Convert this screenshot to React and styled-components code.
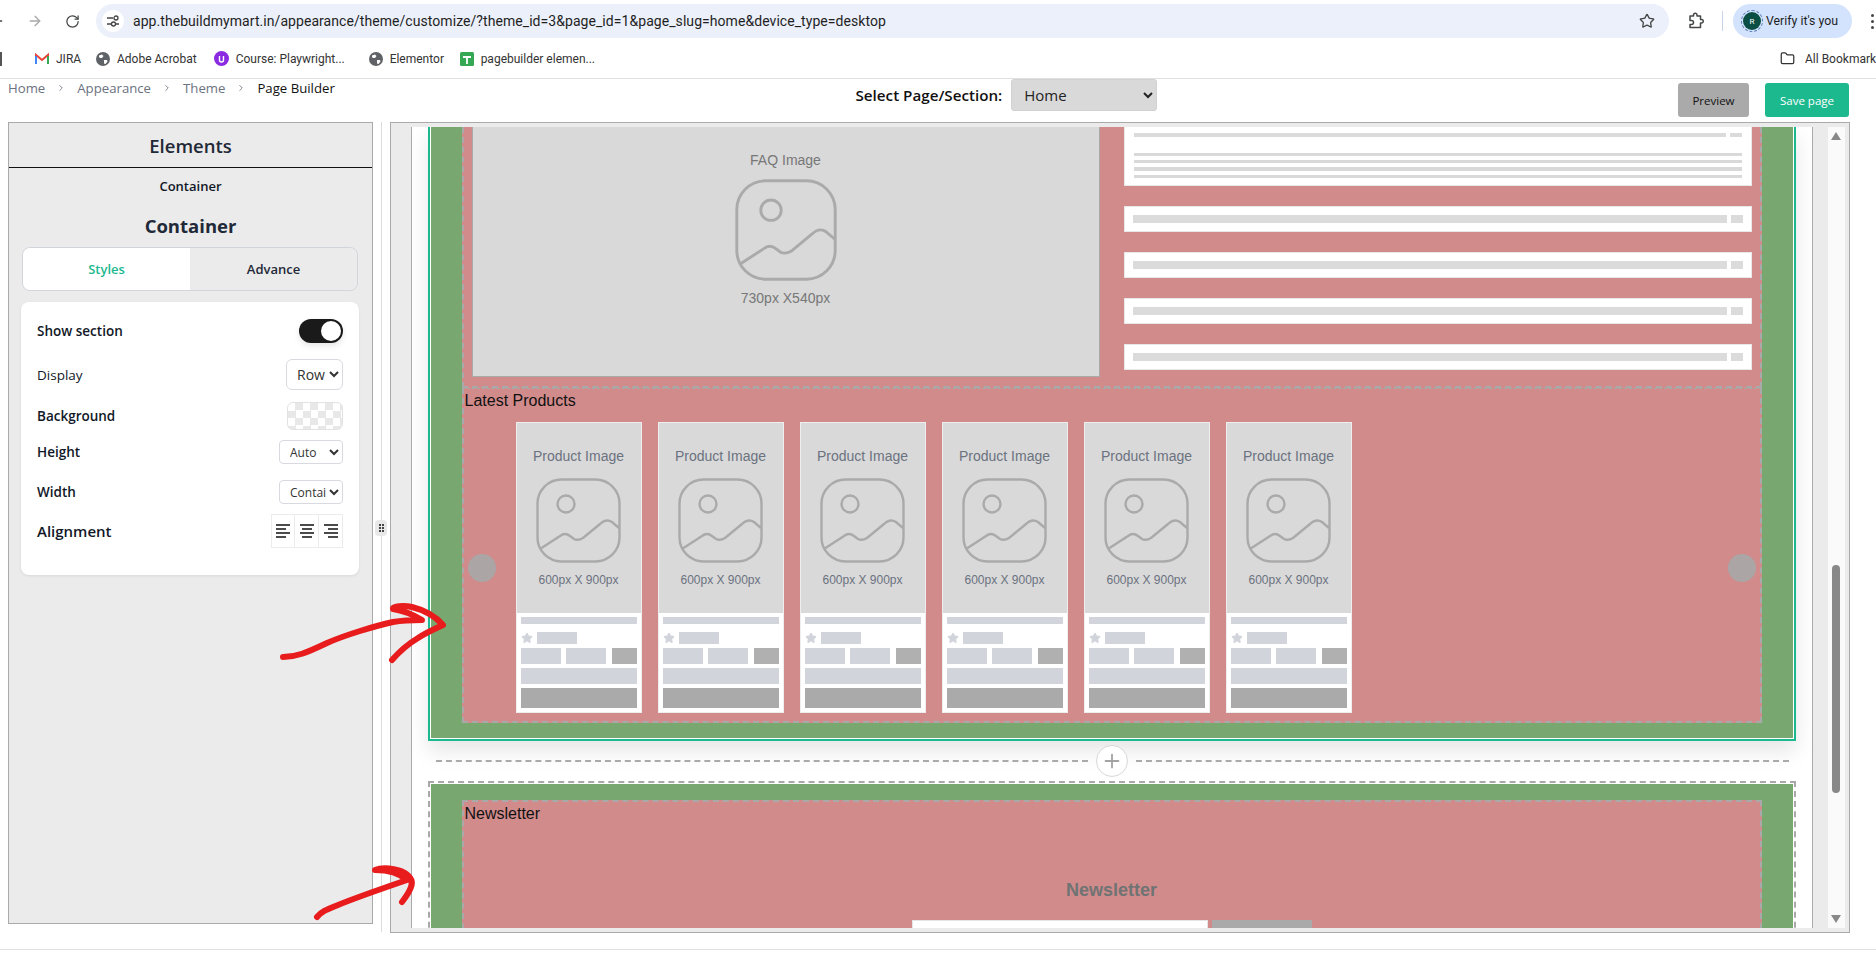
import React from 'react';
import styled, { createGlobalStyle } from 'styled-components';
import { ArrowLeft, ArrowRight, RotateCw, Star, Folder, ChevronRight, Plus } from 'lucide-react';

const UI_FONT = '"Open Sans", "Noto Sans", sans-serif';
const CHROME_FONT = 'Roboto, "Open Sans", sans-serif';
const ARIAL = '"Liberation Sans", Arial, sans-serif';
const GREEN = '#78a770';
const PINK = '#d18b8b';
const TEAL = '#1cb98f';
const DASH = '#a9a9a9';

const GlobalStyle = createGlobalStyle`
  html, body { margin: 0; padding: 0; background: #fff; }
  * { box-sizing: border-box; }
`;

const Screen = styled.div`
  position: relative;
  width: 1876px;
  height: 966px;
  overflow: hidden;
  font-family: ${UI_FONT};
  background: #fff;
`;

/* browser chrome */
const AddressRow = styled.div`
  height: 42px;
  display: flex;
  align-items: center;
  font-family: ${CHROME_FONT};
  color: #444746;
`;
const NavIcon = styled.span`
  display: flex;
  margin-left: ${p => p.$ml}px;
  color: ${p => p.$color || '#444746'};
`;
const Omnibox = styled.div`
  margin-left: 16px;
  width: 1573px;
  height: 34px;
  border-radius: 17px;
  background: #ebf0fa;
  display: flex;
  align-items: center;
  padding: 0 14px 0 6px;
`;
const SiteInfo = styled.span`
  width: 22px;
  height: 22px;
  margin-right: 9px;
  border-radius: 50%;
  background: #fff;
  display: flex;
  align-items: center;
  justify-content: center;
`;
const Url = styled.span`
  flex: 1;
  font-size: 14px;
  letter-spacing: 0.06px;
  color: #1f1f1f;
`;
const ToolDivider = styled.span`
  width: 1px;
  height: 20px;
  margin: 0 10px 0 18px;
  background: #c7d4ea;
`;
const VerifyPill = styled.div`
  width: 119px;
  height: 34px;
  border-radius: 17px;
  background: #d3e3fd;
  display: flex;
  align-items: center;
  padding-left: 10px;
  gap: 5px;
  font-size: 12.3px;
  color: #1f1f1f;
`;
const Avatar = styled.span`
  width: 18px;
  height: 18px;
  border-radius: 50%;
  background: #0b4f44;
  outline: 1px dashed #5a7fb0;
  outline-offset: 1px;
  color: #fff;
  font-size: 8px;
  display: flex;
  align-items: center;
  justify-content: center;
`;
const Dots = styled.span`
  margin-left: 19px;
  display: grid;
  gap: 3px;
  & > i { display: block; width: 3px; height: 3px; border-radius: 50%; background: #444746; }
`;
const BookmarkRow = styled.div`
  height: 37px;
  padding-bottom: 3px;
  display: flex;
  align-items: center;
  border-bottom: 1px solid #e0e0e0;
  font-family: ${CHROME_FONT};
  font-size: 12px;
  color: #333;
  white-space: nowrap;
`;
const AppsGrid = styled.span`
  width: 4px;
  height: 14px;
  border: 2px solid #555;
  border-left: none;
`;
const BarDivider = styled.span`
  width: 1px;
  height: 20px;
  background: #c7d4ea;
  margin-left: ${p => p.$before || 0}px;
`;
const Bookmark = styled.span`
  display: flex;
  align-items: center;
  gap: 7px;
  margin-left: ${p => p.$ml}px;
  width: ${p => p.$w}px;
`;
const Favicon = styled.svg`
  width: ${p => p.$size || 14}px;
  height: ${p => p.$size || 14}px;
  flex: none;
`;

/* builder top bar */
const TopBar = styled.div`
  height: 43px;
  padding: 0 27px 0 8px;
  display: flex;
  justify-content: space-between;
`;
const Crumbs = styled.nav`
  display: flex;
  align-items: center;
  height: 18px;
  font-size: 13.2px;
  color: #6b7280;
  & > svg { margin: 0 11px; color: #6b7280; }
`;
const CrumbCurrent = styled.span`
  color: #111;
`;
const PagePicker = styled.div`
  display: flex;
  align-items: flex-start;
  gap: 9px;
`;
const PickerLabel = styled.label`
  font-size: 15.2px;
  font-weight: 600;
  color: #111;
  line-height: 32px;
`;
const PickerSelect = styled.select`
  width: 146px;
  height: 32px;
  padding-left: 8px;
  font-family: ${UI_FONT};
  font-size: 15px;
  color: #222;
  background: #d9d9d9;
  border: 1px solid #d2d2d2;
  border-radius: 3px;
`;
const Actions = styled.div`
  display: flex;
  gap: 16px;
  padding-top: 4px;
`;
const ActionButton = styled.button`
  height: 34px;
  width: ${p => p.$w}px;
  border: none;
  border-radius: 3px;
  font-family: ${UI_FONT};
  font-size: 11.5px;
  color: ${p => (p.$primary ? '#fff' : '#111')};
  background: ${p => (p.$primary ? TEAL : '#aaa')};
`;

/* main area */
const Workspace = styled.div`
  height: 810px;
  display: flex;
  padding-left: 8px;
`;
const Panel = styled.aside`
  width: 365px;
  height: 802px;
  background: #ebebeb;
  border: 1px solid #aaa;
  color: #1f2937;
`;
const PanelHeader = styled.h2`
  margin: 0;
  height: 45px;
  border-bottom: 1px solid #111;
  font-size: 18.5px;
  font-weight: 600;
  line-height: 46px;
  text-align: center;
`;
const PanelCrumb = styled.div`
  margin-top: 8px;
  font-size: 13px;
  font-weight: 600;
  line-height: 20px;
  text-align: center;
  color: #111827;
`;
const PanelTitle = styled.h3`
  margin: 17px 0 0;
  font-size: 18.5px;
  font-weight: 700;
  line-height: 26px;
  text-align: center;
`;
const Tabs = styled.div`
  margin: 8px 14px 0 13px;
  height: 44px;
  display: grid;
  grid-template-columns: 1fr 1fr;
  border: 1px solid #d1d5db;
  border-radius: 8px;
  overflow: hidden;
`;
const Tab = styled.div`
  display: flex;
  align-items: center;
  justify-content: center;
  font-size: 13px;
  font-weight: 600;
  background: ${p => (p.$active ? '#fff' : '#ebebeb')};
  color: ${p => (p.$active ? TEAL : '#1f2937')};
`;
const StyleCard = styled.div`
  margin: 11px 13px 0 12px;
  height: 273px;
  padding: 17px 16px 0 16px;
  background: #fff;
  border-radius: 8px;
  box-shadow: 0 1px 3px rgba(0, 0, 0, 0.08);
  display: flex;
  flex-direction: column;
`;
const Field = styled.div`
  display: flex;
  align-items: center;
  justify-content: space-between;
  height: ${p => p.$h}px;
  margin-top: ${p => p.$mt || 0}px;
  font-size: ${p => p.$size || 13.5}px;
  font-weight: ${p => p.$weight || 550};
  color: #111827;
`;
const PlainLabel = styled.span`
  font-weight: 400;
  color: #111827;
`;
const Toggle = styled.span`
  width: 44px;
  height: 24px;
  padding: 2px;
  border-radius: 12px;
  background: #1a1a1a;
  display: flex;
  justify-content: flex-end;
  box-shadow: 0 3px 6px rgba(0, 0, 0, 0.1);
  & > i { width: 20px; height: 20px; border-radius: 50%; background: #fff; }
`;
const FieldSelect = styled.select`
  width: ${p => p.$w}px;
  height: ${p => p.$h}px;
  padding-left: 6px;
  font-family: ${UI_FONT};
  font-size: ${p => p.$size}px;
  color: #333;
  background: #fff;
  border: 1px solid #d8dae0;
  border-radius: ${p => p.$radius}px;
`;
const Swatch = styled.span`
  width: 56px;
  height: 28px;
  border: 1px solid #e2e2e2;
  border-radius: 6px;
  background: repeating-conic-gradient(#e8e8e8 0 25%, #fff 0 50%) 0 0 / 15px 15px;
`;
const AlignGroup = styled.div`
  display: flex;
`;
const AlignButton = styled.span`
  width: 24px;
  height: 34px;
  border: 1px solid #ececec;
  display: flex;
  align-items: center;
  justify-content: center;
  & + & { border-left: none; }
`;
const Gutter = styled.div`
  position: relative;
  width: 9px;
  height: 810px;
  margin-right: 8px;
  border-right: 1px solid #dcdcdc;
`;
const Handle = styled.span`
  position: absolute;
  top: 398px;
  left: 2px;
  width: 12px;
  height: 16px;
  border-radius: 4px;
  background: #e8e8e8;
  display: grid;
  grid-template-columns: 2px 2px;
  gap: 1px;
  align-content: center;
  justify-content: center;
  & > i { width: 2px; height: 2px; background: #444; }
`;

/* canvas */
const Canvas = styled.div`
  width: 1460px;
  height: 811px;
  border: 1.5px solid #aaa;
  background: #ebebeb;
  padding: 4px 3px 3px 19.5px;
  display: flex;
`;
const PageView = styled.div`
  width: 1402px;
  height: 801px;
  overflow: hidden;
  background: #fff;
  border-left: 1px solid #aaa;
  border-right: 1px solid #aaa;
`;
const PageInner = styled.div`
  padding: 0 16px;
`;
const Scrollbar = styled.div`
  width: 17px;
  height: 801px;
  margin-left: 15px;
  background: #fafafa;
  display: flex;
  flex-direction: column;
  align-items: center;
`;
const ScrollArrow = styled.span`
  width: 0;
  height: 0;
  margin: ${p => (p.$down ? 'auto 0 5px' : '5px 0 0')};
  border-left: 5px solid transparent;
  border-right: 5px solid transparent;
  ${p => (p.$down ? 'border-top: 8px solid #888;' : 'border-bottom: 8px solid #888;')}
`;
const ScrollThumb = styled.span`
  width: 8px;
  height: 228px;
  margin-top: 425px;
  border-radius: 4px;
  background: #888;
`;
const Frame = styled.section`
  background: #fff;
  border-style: ${p => (p.$selected ? 'solid' : 'dashed')};
  border-color: ${p => (p.$selected ? TEAL : DASH)};
  border-width: ${p => (p.$selected ? '0 2px 2px' : '2px')};
  padding: ${p => (p.$selected ? 0 : 1)}px 1px 1px;
  box-shadow: ${p => (p.$selected ? '0 10px 20px rgba(0, 0, 0, 0.1)' : 'none')};
`;
const GreenBand = styled.div`
  background: ${GREEN};
  padding: ${p => p.$top}px 31px ${p => p.$bottom}px;
`;
const PinkBlock = styled.div`
  background: ${PINK};
  border: 2px dashed ${DASH};
  border-top-width: ${p => p.$topWidth ?? 2}px;
  border-bottom-width: ${p => p.$bottomWidth ?? 2}px;
`;
const FaqGrid = styled.div`
  display: grid;
  grid-template-columns: 628px 628px;
  column-gap: 24px;
  padding: 0 8px 9px 8px;
`;
const ImageSlot = styled.div`
  display: flex;
  flex-direction: column;
  align-items: center;
  background: #d9d9d9;
  color: #6b7280;
  font-family: ${ARIAL};
`;
const FaqSlot = styled(ImageSlot)`
  height: 250px;
  padding-top: 25px;
  border: 1px solid #aaa;
  border-top: none;
  font-size: 14px;
  color: #777;
  & > span { line-height: 16px; }
  & > svg { margin: 11px 0 9px; }
`;
const FaqColumn = styled.div`
  display: flex;
  flex-direction: column;
  gap: 20px;
`;
const FaqOpen = styled.div`
  height: 59px;
  padding: 6px 9px 0;
  background: #fff;
  border: 1px solid #e8e8e8;
  border-top: none;
`;
const FaqHeadBars = styled.div`
  display: flex;
  gap: 4px;
  height: ${p => p.$h}px;
  & > i { flex: 1; background: #dbdbdb; }
  & > b { width: 12px; background: #dbdbdb; }
`;
const FaqLines = styled.div`
  margin-top: 16px;
  display: grid;
  gap: 4px;
  & > i { height: 3.2px; background: #d9d9d9; }
`;
const FaqRow = styled.div`
  height: 26px;
  padding: 8px 8px 0;
  background: #fff;
  border: 1px solid #e8e8e8;
`;
const BlockLabel = styled.div`
  padding: ${p => p.$top}px 0 0 1px;
  font-family: ${ARIAL};
  font-size: 16px;
  line-height: 18px;
  color: #111;
`;
const Carousel = styled.div`
  position: relative;
  padding: 12px 0 8px 52px;
  display: flex;
  gap: 16px;
`;
const CarouselDot = styled.span`
  position: absolute;
  top: 144px;
  ${p => (p.$right ? 'right: 4px;' : 'left: 4px;')}
  width: 28px;
  height: 28px;
  border-radius: 50%;
  background: #aba5a5;
`;
const ProductCard = styled.div`
  width: 126px;
  height: 291px;
  background: #fff;
  border: 1px solid #eee;
`;
const ProductSlot = styled(ImageSlot)`
  height: 190px;
  padding-top: 25px;
  font-size: 14px;
  & > span { line-height: 16px; }
  & > svg { margin: 14px 0 9px; }
  & > small { font-size: 12px; line-height: 16px; }
`;
const ProductBody = styled.div`
  padding: 4px 4px 0;
  display: flex;
  flex-direction: column;
`;
const Bar = styled.span`
  display: block;
  height: ${p => p.$h}px;
  width: ${p => (p.$w ? `${p.$w}px` : '100%')};
  margin-top: ${p => p.$mt || 0}px;
  background: ${p => p.$fill || '#d1d5db'};
`;
const Rating = styled.div`
  margin-top: 8px;
  display: flex;
  align-items: center;
  gap: 4px;
`;
const PriceRow = styled.div`
  margin-top: 4px;
  display: flex;
  gap: 5px;
  & > span:last-child { margin-left: 1px; }
`;
const AddRow = styled.div`
  height: 40px;
  padding: 0 7px 0 8px;
  display: flex;
  align-items: center;
  gap: 8px;
`;
const AddLine = styled.span`
  flex: 1;
  border-top: 2px dashed #aaa;
`;
const AddButton = styled.span`
  width: 32px;
  height: 32px;
  border-radius: 50%;
  background: #fff;
  border: 1px solid #d8d8d8;
  display: flex;
  align-items: center;
  justify-content: center;
  color: #a3a3a3;
`;
const NewsTitle = styled.h3`
  margin: 55px 0 0;
  font-family: ${ARIAL};
  font-size: 18px;
  font-weight: 700;
  line-height: 24px;
  text-align: center;
  color: #6f7373;
`;
const NewsForm = styled.div`
  margin-top: 18px;
  display: flex;
  justify-content: center;
  gap: 4px;
`;
const NewsInput = styled.span`
  width: 296px;
  height: 40px;
  background: #fff;
  border: 1px solid #e5e5e5;
`;
const NewsButton = styled.span`
  width: 100px;
  height: 40px;
  background: #aaa;
`;
const BottomLine = styled.div`
  margin-top: 17px;
  border-top: 1px solid #e2e2e2;
`;
const Scribbles = styled.svg`
  position: absolute;
  top: 0;
  left: 0;
  pointer-events: none;
`;

const PlaceholderIcon = ({ size }) => (
  <svg width={size} height={size} viewBox="0 0 85 85" fill="none" stroke="#aaa" strokeWidth="2.4">
    <rect x="1.5" y="1.5" width="82" height="82" rx="24" />
    <circle cx="30" cy="26" r="8.5" />
    <path d="M4 71 L24 58 Q29 54 34 58 L38 61 Q42 63 47 60 L64 46 Q70 40 76 44 L83 50" />
  </svg>
);

const AlignIcon = ({ side }) => {
  const short = side === 'left' ? [0, 10] : side === 'center' ? [2, 12] : [4, 14];
  return (
    <svg width="14" height="14" viewBox="0 0 14 14" stroke="#111" strokeWidth="1.4">
      <path d={`M0 1H14M${short[0]} 5H${short[1]}M0 9H14M${short[0]} 13H${short[1]}`} />
    </svg>
  );
};

const GlobeIcon = () => (
  <Favicon viewBox="0 0 14 14">
    <circle cx="7" cy="7" r="7" fill="#5f6368" />
    <path d="M3 3.5 6 2.5 7.5 4 6 6 4 6 3 5ZM8 8h3l.5 1.5L9.5 12 8 11.5Z" fill="#fff" />
  </Favicon>
);

const ExtensionIcon = () => (
  <svg width="16" height="18" viewBox="0 0 16 18" fill="none" stroke="#444746" strokeWidth="1.5" strokeLinejoin="round">
    <path d="M2 4H5.5V3A1.6 1.6 0 0 1 9 3V4H12.5V7.5H13.5A1.6 1.6 0 0 1 13.5 11H12.5V15.5H2V12.5H3.5A1.8 1.8 0 0 0 3.5 8.5H2Z" />
  </svg>
);

const products = [1, 2, 3, 4, 5, 6];
const faqRows = [1, 2, 3, 4];

export default function App() {
  return (
    <Screen>
      <GlobalStyle />
      <AddressRow>
        <NavIcon $ml={-11}><ArrowLeft size={16} /></NavIcon>
        <NavIcon $ml={22} $color="#a8a8a8"><ArrowRight size={16} /></NavIcon>
        <NavIcon $ml={22}><RotateCw size={15} /></NavIcon>
        <Omnibox>
          <SiteInfo>
            <svg width="14" height="14" viewBox="0 0 14 14" fill="none" stroke="#444" strokeWidth="1.3">
              <path d="M1 4H7M1 10H5M10 10H13" />
              <circle cx="10" cy="4" r="2" />
              <circle cx="7.5" cy="10" r="2" />
            </svg>
          </SiteInfo>
          <Url>app.thebuildmymart.in/appearance/theme/customize/?theme_id=3&amp;page_id=1&amp;page_slug=home&amp;device_type=desktop</Url>
          <Star size={16} color="#444746" />
        </Omnibox>
        <NavIcon $ml={19}><ExtensionIcon /></NavIcon>
        <ToolDivider />
        <VerifyPill>
          <Avatar>R</Avatar>
          Verify it's you
        </VerifyPill>
        <Dots><i /><i /><i /></Dots>
      </AddressRow>

      <BookmarkRow>
        <AppsGrid />
        <BarDivider $before={15} />
        <Bookmark $ml={18} $w={43}>
          <Favicon viewBox="0 0 14 14">
            <path d="M1 12V3L7 8 13 3V12" fill="none" stroke="#ea4335" strokeWidth="2" />
            <path d="M1 12V4" stroke="#4285f4" strokeWidth="2" />
            <path d="M13 12V4" stroke="#34a853" strokeWidth="2" />
          </Favicon>
          JIRA
        </Bookmark>
        <Bookmark $ml={18} $w={101}><GlobeIcon />Adobe Acrobat</Bookmark>
        <Bookmark $ml={17} $w={128}>
          <Favicon $size={15} viewBox="0 0 15 15">
            <circle cx="7.5" cy="7.5" r="7.5" fill="#8a2be2" />
            <path d="M5.5 5V9A2 2 0 0 0 9.5 9V5" fill="none" stroke="#fff" strokeWidth="1.4" />
          </Favicon>
          Course: Playwright...
        </Bookmark>
        <Bookmark $ml={27} $w={75}><GlobeIcon />Elementor</Bookmark>
        <Bookmark $ml={16} $w={137}>
          <Favicon viewBox="0 0 14 14">
            <rect width="14" height="14" rx="1.5" fill="#34a853" />
            <path d="M3 5H11M7 5V12" stroke="#fff" strokeWidth="1.8" />
          </Favicon>
          pagebuilder elemen...
        </Bookmark>
        <BarDivider $before={1168} />
        <Bookmark $ml={17} $w={110}>
          <Folder size={15} color="#333" />
          &nbsp;All Bookmarks
        </Bookmark>
      </BookmarkRow>

      <TopBar>
        <Crumbs>
          Home<ChevronRight size={10} strokeWidth={2} />
          Appearance<ChevronRight size={10} strokeWidth={2} />
          Theme<ChevronRight size={10} strokeWidth={2} />
          <CrumbCurrent>Page Builder</CrumbCurrent>
        </Crumbs>
        <PagePicker>
          <PickerLabel>Select Page/Section:</PickerLabel>
          <PickerSelect defaultValue="Home"><option>Home</option></PickerSelect>
        </PagePicker>
        <Actions>
          <ActionButton $w={71}>Preview</ActionButton>
          <ActionButton $w={84} $primary>Save page</ActionButton>
        </Actions>
      </TopBar>

      <Workspace>
        <Panel>
          <PanelHeader>Elements</PanelHeader>
          <PanelCrumb>Container</PanelCrumb>
          <PanelTitle>Container</PanelTitle>
          <Tabs>
            <Tab $active>Styles</Tab>
            <Tab>Advance</Tab>
          </Tabs>
          <StyleCard>
            <Field $h={24}>Show section<Toggle><i /></Toggle></Field>
            <Field $h={31} $mt={16}>
              <PlainLabel>Display</PlainLabel>
              <FieldSelect $w={57} $h={31} $size={14} $radius={6} defaultValue="Row"><option>Row</option></FieldSelect>
            </Field>
            <Field $h={28} $mt={12}>Background<Swatch /></Field>
            <Field $h={24} $mt={10}>
              Height
              <FieldSelect $w={64} $h={24} $size={12} $radius={4} defaultValue="Auto"><option>Auto</option></FieldSelect>
            </Field>
            <Field $h={24} $mt={16}>
              Width
              <FieldSelect $w={64} $h={24} $size={12} $radius={4} defaultValue="Container"><option>Container</option></FieldSelect>
            </Field>
            <Field $h={34} $size={15} $weight={600} $mt={10}>
              Alignment
              <AlignGroup>
                <AlignButton><AlignIcon side="left" /></AlignButton>
                <AlignButton><AlignIcon side="center" /></AlignButton>
                <AlignButton><AlignIcon side="right" /></AlignButton>
              </AlignGroup>
            </Field>
          </StyleCard>
        </Panel>

        <Gutter>
          <Handle><i /><i /><i /><i /><i /><i /></Handle>
        </Gutter>

        <Canvas>
          <PageView>
            <PageInner>
              <Frame $selected>
                <GreenBand $top={0} $bottom={15}>
                  <PinkBlock $topWidth={0}>
                    <FaqGrid>
                      <FaqSlot>
                        <span>FAQ Image</span>
                        <PlaceholderIcon size={102} />
                        <span>730px X540px</span>
                      </FaqSlot>
                      <FaqColumn>
                        <FaqOpen>
                          <FaqHeadBars $h={4}><i /><b /></FaqHeadBars>
                          <FaqLines><i /><i /><i /><i /></FaqLines>
                        </FaqOpen>
                        {faqRows.map(row => (
                          <FaqRow key={row}>
                            <FaqHeadBars $h={8}><i /><b /></FaqHeadBars>
                          </FaqRow>
                        ))}
                      </FaqColumn>
                    </FaqGrid>
                  </PinkBlock>
                  <PinkBlock $topWidth={1}>
                    <BlockLabel $top={3}>Latest Products</BlockLabel>
                    <Carousel>
                      <CarouselDot />
                      {products.map(id => (
                        <ProductCard key={id}>
                          <ProductSlot>
                            <span>Product Image</span>
                            <PlaceholderIcon size={85} />
                            <small>600px X 900px</small>
                          </ProductSlot>
                          <ProductBody>
                            <Bar $h={7} />
                            <Rating>
                              <Star size={12} fill="#d1d5db" color="#d1d5db" />
                              <Bar $h={12} $w={40} />
                            </Rating>
                            <PriceRow>
                              <Bar $h={16} $w={40} />
                              <Bar $h={16} $w={40} />
                              <Bar $h={16} $w={25} $fill="#b0b0b0" />
                            </PriceRow>
                            <Bar $h={16} $mt={4} />
                            <Bar $h={20} $mt={4} $fill="#aaa" />
                          </ProductBody>
                        </ProductCard>
                      ))}
                      <CarouselDot $right />
                    </Carousel>
                  </PinkBlock>
                </GreenBand>
              </Frame>

              <AddRow>
                <AddLine />
                <AddButton><Plus size={22} strokeWidth={2} /></AddButton>
                <AddLine />
              </AddRow>

              <Frame>
                <GreenBand $top={16} $bottom={15}>
                  <PinkBlock $bottomWidth={0}>
                    <BlockLabel $top={3}>Newsletter</BlockLabel>
                    <NewsTitle>Newsletter</NewsTitle>
                    <NewsForm>
                      <NewsInput />
                      <NewsButton />
                    </NewsForm>
                  </PinkBlock>
                </GreenBand>
              </Frame>
            </PageInner>
          </PageView>
          <Scrollbar>
            <ScrollArrow />
            <ScrollThumb />
            <ScrollArrow $down />
          </Scrollbar>
        </Canvas>
      </Workspace>
      <BottomLine />

      <Scribbles width="1876" height="966" viewBox="0 0 1876 966" fill="none" stroke="#e81c1c" strokeWidth="6" strokeLinecap="round" strokeLinejoin="round">
        <path d="M283 657 C296 657 306 653 327 643 C345 635 375 626 393 622 C405 620 417 620 422 620 C412 614 400 610 393 609 C392 606 404 605 412 607 C424 610 436 617 443 625 C432 630 424 634 418 638 C408 644 399 652 392 660" />
        <path d="M317 917 C322 911 328 909 338 905 C350 900 375 891 407 880 C398 872 387 870 375 870 C382 867 396 868 405 873 C411 877 413 882 411 887 C409 893 405 898 402 902" />
      </Scribbles>
    </Screen>
  );
}
